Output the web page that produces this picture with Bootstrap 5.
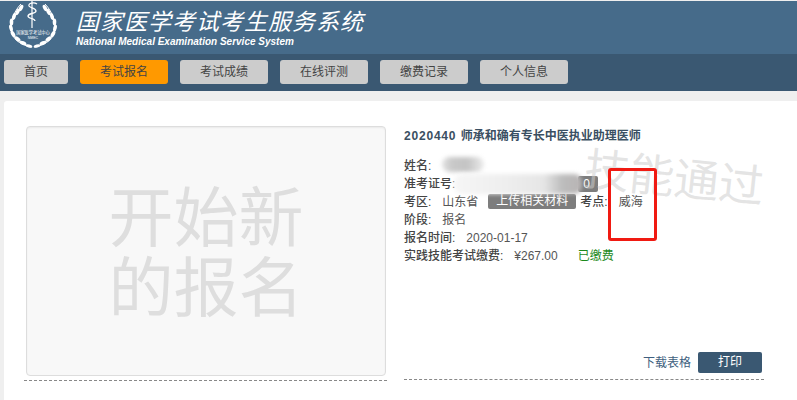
<!DOCTYPE html>
<html lang="zh-CN"><head><meta charset="utf-8">
<title>国家医学考试考生服务系统</title>
<link rel="stylesheet" href="https://cdn.jsdelivr.net/npm/bootstrap@5.3.0/dist/css/bootstrap.min.css">
<style>
html,body{height:400px;overflow:hidden}
body{background:#efefef;font-family:"Liberation Sans","Noto Sans CJK SC",sans-serif;font-size:12px;color:#555;padding-top:1px}
.hd-top{height:53px;background:#466b8a;color:#fff}
.hd-logo{width:50px;height:50px;margin-left:8px;flex:none}
.hd-text{margin-left:18px;padding-top:7px}
.hd-cn{font-size:23px;line-height:29px;font-style:italic;letter-spacing:1px;white-space:nowrap}
.hd-en{font-size:10px;line-height:10px;font-weight:700;font-style:italic;white-space:nowrap}
.hd-nav{height:37px;background:#3a5872;padding:6px 0 7px 4px;gap:12px}
.nav-pill{width:88px;height:24px;background:#ccc;color:#444;border-radius:3px;font-size:12px;line-height:24px;text-align:center;text-decoration:none}
.nav-pill.short{width:64px}
.nav-pill.on{background:#f90}
.sheet{position:relative;margin:10px 0 0 4px;height:300px;background:#fff;border-radius:3px 0 0 0;padding:25px 22px 0}
.left-col{width:361px;flex:none}
.start-box{width:360px;height:250px;background:#f8f8f8;border:1px solid #ddd;border-radius:4px;box-shadow:inset 0 1px 2px rgba(0,0,0,.06);color:#dedede;font-size:65px;line-height:70px;text-align:center;padding-top:57px;margin-bottom:4px}
.dash-line{border-bottom:1px dashed #888;height:1px}
.left-col .dash-line{margin-left:-2px}
.right-col{margin-left:17px;width:362px;position:relative;padding-top:1px}
.exam-title{font-size:12px;font-weight:700;color:#3a4f62;line-height:18px;margin:0 0 12px}
.exam-no{letter-spacing:.8px;margin-right:1px}
.info-row{line-height:18px;height:18px;white-space:nowrap}
.info-row b{font-weight:500;color:#444}
.info-row span{margin-left:11px}
.info-row .paid{color:#1c8a1c;margin-left:20px}
.info-row .up-badge{display:inline-block;background:#7d7d7d;color:#fff;border-radius:2px;width:88px;height:15px;line-height:15px;text-align:center;margin-left:10px;margin-right:4px;vertical-align:1px}
.id-badge{position:absolute;left:174px;top:50px;width:20px;height:16px;background:#7d7d7d;color:#fff;line-height:16px;text-align:right;padding-right:8px;border-radius:2px}
.smudge{position:absolute;filter:blur(2px);border-radius:8px}
.smudge.a{left:38px;top:31px;width:42px;height:15px;background:linear-gradient(90deg,#e2e2e2,#c8c8c8 25%,#c4c4c4 60%,#ececec)}
.smudge.b{left:50px;top:48px;width:128px;height:20px;background:linear-gradient(90deg,#f6f6f6,#eeeeee 40%,#e6e6e6 70%,#bcbcbc 85%,#b8b4b4)}
.actions{position:absolute;right:4px;top:226px;gap:7px}
.dl-link{color:#3f5f80;text-decoration:none}
.print-btn{width:64px;height:21px;background:#3a5872;color:#fff;border:0;border-radius:2px;font-size:12px;line-height:21px;padding:0;text-align:center}
.right-col .dash-line{position:absolute;left:0;top:253px;width:360px}
.mark-word{position:absolute;left:180px;top:28px;font-size:45px;line-height:50px;color:rgba(205,205,205,.55);transform:rotate(6deg);white-space:nowrap;pointer-events:none}
.red-box{position:absolute;left:204px;top:42px;width:49px;height:73px;border:3px solid #f01a12;border-radius:3px;pointer-events:none}
</style></head>
<body>
<header>
<div class="hd-top d-flex">
<svg class="hd-logo" viewBox="0 0 50 50" fill="#fff" stroke="none">
<g stroke="#fff" fill="none">
<path d="M13 3C5 11 1 24 4 33c3 7 10 11 19 13M37 3c8 8 12 21 9 30-3 7-10 11-19 13" stroke-width="1"/>
<path d="M24 0v27" stroke-width="1.2"/>
<path d="M29 3c-3-2-9-1-8 2 1 2 7 2 7 5s-8 2-8 5 7 2 7 5" stroke-width="1.3"/>
</g>
<g>
<ellipse cx="13" cy="7" rx="1.8" ry="3.4" transform="rotate(30 13 7)"/><ellipse cx="9.5" cy="11" rx="1.8" ry="3.4" transform="rotate(25 9.5 11)"/><ellipse cx="6" cy="15.5" rx="1.8" ry="3.6" transform="rotate(15 6 15.5)"/><ellipse cx="3.5" cy="21" rx="1.8" ry="3.6"/><ellipse cx="3" cy="27" rx="1.8" ry="3.6" transform="rotate(-12 3 27)"/><ellipse cx="5" cy="33" rx="1.8" ry="3.6" transform="rotate(-30 5 33)"/><ellipse cx="9.5" cy="38" rx="1.8" ry="3.6" transform="rotate(-50 9.5 38)"/><ellipse cx="15" cy="42" rx="1.8" ry="3.6" transform="rotate(-65 15 42)"/><ellipse cx="21" cy="45" rx="1.6" ry="3.4" transform="rotate(-75 21 45)"/>
<ellipse cx="37" cy="7" rx="1.8" ry="3.4" transform="rotate(-30 37 7)"/><ellipse cx="40.5" cy="11" rx="1.8" ry="3.4" transform="rotate(-25 40.5 11)"/><ellipse cx="44" cy="15.5" rx="1.8" ry="3.6" transform="rotate(-15 44 15.5)"/><ellipse cx="46.5" cy="21" rx="1.8" ry="3.6"/><ellipse cx="47" cy="27" rx="1.8" ry="3.6" transform="rotate(12 47 27)"/><ellipse cx="45" cy="33" rx="1.8" ry="3.6" transform="rotate(30 45 33)"/><ellipse cx="40.5" cy="38" rx="1.8" ry="3.6" transform="rotate(50 40.5 38)"/><ellipse cx="35" cy="42" rx="1.8" ry="3.6" transform="rotate(65 35 42)"/><ellipse cx="29" cy="45" rx="1.6" ry="3.4" transform="rotate(75 29 45)"/>
</g>
<text x="25" y="33" font-size="4.2" text-anchor="middle">国家医学考试中心</text>
<text x="25" y="38" font-size="3.5" text-anchor="middle">NMEC</text>
</svg>
<div class="hd-text">
<div class="hd-cn">国家医学考试考生服务系统</div>
<div class="hd-en">National Medical Examination Service System</div>
</div>
</div>
<nav class="hd-nav d-flex">
<a class="nav-pill short" href="#">首页</a>
<a class="nav-pill on" href="#">考试报名</a>
<a class="nav-pill" href="#">考试成绩</a>
<a class="nav-pill" href="#">在线评测</a>
<a class="nav-pill" href="#">缴费记录</a>
<a class="nav-pill" href="#">个人信息</a>
</nav>
</header>
<main class="sheet d-flex">
<div class="left-col">
<div class="start-box">开始新<br>的报名</div>
<div class="dash-line"></div>
</div>
<div class="right-col">
<h1 class="exam-title"><span class="exam-no">2020440</span> 师承和确有专长中医执业助理医师</h1>
<div class="info-row"><b>姓名:</b></div>
<div class="info-row"><b>准考证号:</b></div>
<div class="info-row"><b>考区:</b><span>山东省</span><span class="up-badge">上传相关材料</span><b>考点:</b><span>威海</span></div>
<div class="info-row"><b>阶段:</b><span>报名</span></div>
<div class="info-row"><b>报名时间:</b><span>2020-01-17</span></div>
<div class="info-row"><b>实践技能考试缴费:</b><span>¥267.00</span><span class="paid">已缴费</span></div>
<div class="id-badge">0</div>
<div class="smudge a"></div>
<div class="smudge b"></div>
<div class="mark-word">技能通过</div>
<div class="red-box"></div>
<div class="actions d-flex align-items-center"><a class="dl-link" href="#">下载表格</a><button class="print-btn btn" type="button">打印</button></div>
<div class="dash-line"></div>
</div>
</main>
</body></html>
